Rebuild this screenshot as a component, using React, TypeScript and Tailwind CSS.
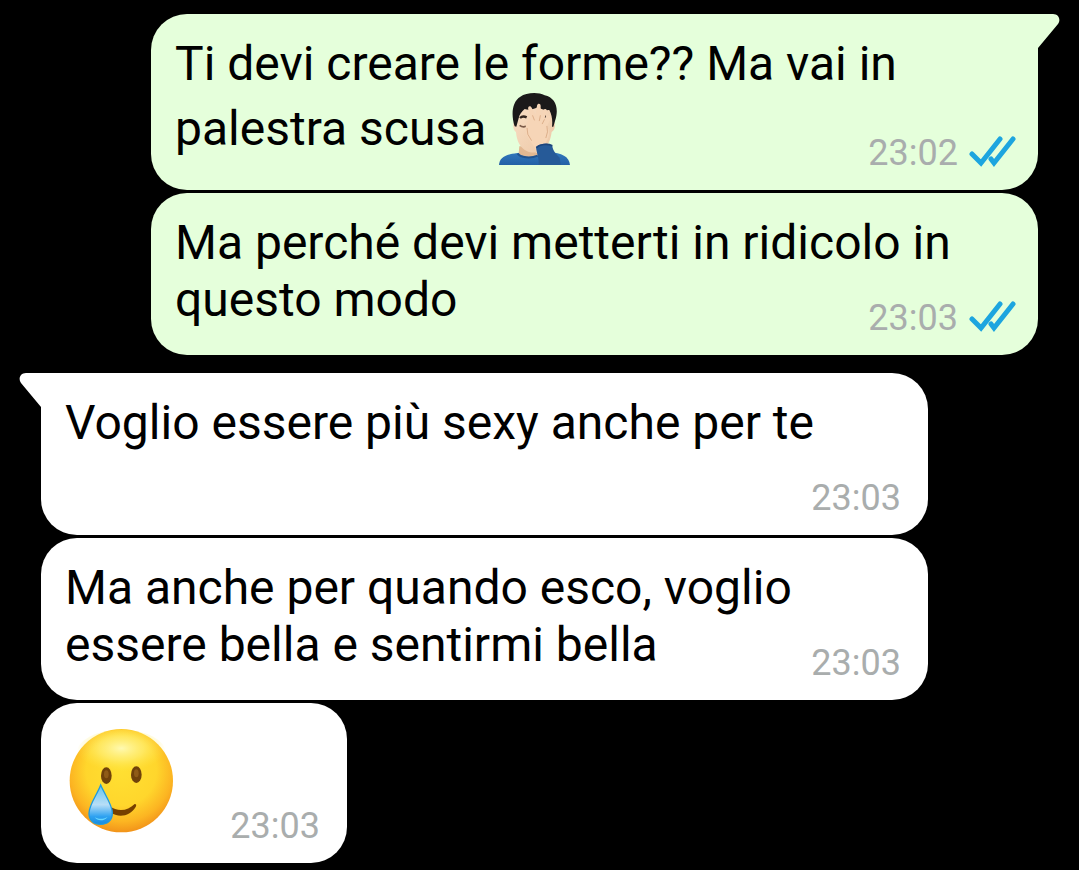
import { ReactNode } from "react"

type BubbleProps = {
    time: string
    sent?: boolean
    tail?: boolean
    short?: boolean
    children: ReactNode
}

const Facepalm = () => (
    <svg viewBox="24 19 219 219" role="img" aria-label="facepalm" className="inline-block size-[73px] align-[-20px]">
        <defs>
            <linearGradient id="skin" x1="0" y1="0" x2="1" y2="1">
                <stop offset="0" stopColor="#f9dfc5" />
                <stop offset="1" stopColor="#ecc7a6" />
            </linearGradient>
            <linearGradient id="shirt" x1="0" y1="0" x2="0" y2="1">
                <stop offset="0" stopColor="#3279bd" />
                <stop offset="1" stopColor="#2360a6" />
            </linearGradient>
        </defs>
        <path d="M27 238C29 216 44 207 82 202L176 198C216 203 237 211 240 238Z" fill="url(#shirt)" />
        <path d="M88 182L86 203C98 217 128 217 148 208V180Z" fill="#e2b892" />
        <path d="M75 105C67 108 68 133 78 139C80 168 92 187 110 196C122 202 140 202 152 196C172 188 182 164 185 139C197 134 198 108 189 106L180 60H84Z" fill="url(#skin)" />
        <path d="M74 122C62 84 67 48 91 33C108 21 144 18 164 29C197 36 208 68 195 106L190 123H186C188 104 186 88 178 73C161 75 150 69 144 64C128 72 116 74 104 70C95 78 88 86 86 98L79 123Z" fill="#1b191a" />
        <path d="M90 97Q98 89 110 95" fill="none" stroke="#33261f" strokeWidth="7" />
        <circle cx="163" cy="92" r="5" fill="#33261f" />
        <path d="M89 119Q98 126 108 122" fill="none" stroke="#7a5a48" strokeWidth="5" />
        <path d="M138 202C139 184 122 172 111 151C105 139 106 120 111 111C115 103 121 97 123 92L115 72C112 62 120 58 125 66L137 89L141 60C143 52 152 53 152 61L152 91L160 74C165 67 172 70 170 77L163 102L174 91C181 87 185 93 181 101L171 122C180 136 179 153 170 166C165 174 169 188 172 195Z" fill="#f6d5b7" />
        <path d="M128 90L133 103M151 90L148 105M163 102L157 114M111 128Q109 146 124 164M171 122Q176 138 168 156" fill="none" stroke="#ddb08c" strokeWidth="3" strokeLinecap="round" />
        <path d="M138 184C148 173 173 171 187 180C188 194 197 204 209 216L212 238H146C148 220 140 204 138 184Z" fill="#265a98" />
        <path d="M139 186C149 176 171 173 187 180" fill="none" stroke="#1c447c" strokeWidth="5" />
        <path d="M83 204C92 216 121 219 143 210" fill="none" stroke="#205390" strokeWidth="6" />
    </svg>
)

const SmilingTear = () => (
    <svg viewBox="27 23 315 315" role="img" aria-label="smiling face with tear" className="size-[105px] shrink-0">
        <defs>
            <radialGradient id="face" cx="0.5" cy="0.4" r="0.62">
                <stop offset="0" stopColor="#ffe032" />
                <stop offset="0.55" stopColor="#ffd62c" />
                <stop offset="0.8" stopColor="#fcb522" />
                <stop offset="1" stopColor="#f08d18" />
            </radialGradient>
            <radialGradient id="shine" cx="0.5" cy="0.4" r="0.5">
                <stop offset="0" stopColor="#fffbb8" stopOpacity="0.95" />
                <stop offset="0.5" stopColor="#fff383" stopOpacity="0.6" />
                <stop offset="1" stopColor="#ffe94c" stopOpacity="0" />
            </radialGradient>
            <linearGradient id="drop" x1="0" y1="0" x2="0" y2="1">
                <stop offset="0" stopColor="#65c4ee" />
                <stop offset="0.5" stopColor="#b7def7" />
                <stop offset="0.8" stopColor="#2fa2f1" />
                <stop offset="1" stopColor="#148ae0" />
            </linearGradient>
        </defs>
        <circle cx="184" cy="181" r="155" fill="url(#face)" />
        <ellipse cx="184" cy="98" rx="134" ry="70" fill="url(#shine)" />
        <ellipse cx="139" cy="166" rx="16" ry="25" fill="#70420a" />
        <ellipse cx="229" cy="163" rx="16" ry="25" fill="#70420a" />
        <ellipse cx="139" cy="162" rx="7" ry="12" fill="#8f5b17" />
        <ellipse cx="229" cy="159" rx="7" ry="12" fill="#8f5b17" />
        <path d="M148 257C174 276 203 272 224 251C229 251 230 255 227 260C210 289 174 294 151 275Z" fill="#764000" />
        <path d="M122 194C134 222 157 254 157 277C157 300 143 312 122 312C99 312 87 299 87 279C87 253 112 222 122 194Z" fill="url(#drop)" stroke="#219bdd" strokeWidth="4" />
        <path d="M104 290C112 303 132 304 143 289C136 296 113 298 104 290Z" fill="#68d8ff" />
    </svg>
)

const ReadTicks = () => (
    <svg viewBox="0 0 48 34" role="img" aria-label="read" className="h-[34px] w-12 shrink-0 fill-none stroke-[#1da5df] stroke-[5]">
        <path d="M4 18L13 27L32 3M23 23L26 27L45 3" strokeLinecap="round" strokeLinejoin="miter" />
    </svg>
)

const Tail = ({ sent }: { sent: boolean }) => (
    <svg
        viewBox="0 0 62 36"
        aria-hidden="true"
        className={sent ? "absolute top-0 -right-[22px] h-9 w-[62px] fill-[#e5ffdb]" : "absolute top-0 -left-[22px] h-9 w-[62px] -scale-x-100 fill-white"}
    >
        <path d="M0 0H55C61 0 63 6 60 10L40 34V36H0Z" />
    </svg>
)

// keeps the last line of a message clear of the time
const TimeSpace = ({ sent }: { sent: boolean }) => (
    <span className={sent ? "inline-block h-px w-40" : "inline-block h-px w-28"} />
)

function Bubble({ time, sent = false, tail = false, short = false, children }: BubbleProps) {
    return (
        <li
            className={`relative grid rounded-[36px] px-6 pt-[21px] pb-[17px] ${sent ? "self-end bg-[#e5ffdb]" : "self-start bg-white"} ${short ? "min-h-40 w-[306px]" : "min-h-[162px] w-full max-w-[887px]"}`}
        >
            {tail && <Tail sent={sent} />}
            <div className="relative col-start-1 row-start-1 pb-2 text-5xl leading-[57px] text-black">
                {short ? children : <p>{children}<TimeSpace sent={sent} /></p>}
            </div>
            <div className={`relative col-start-1 row-start-1 flex items-center gap-2.5 self-end justify-self-end text-4xl leading-10 text-[#a9adad] ${sent ? "-mr-0.5" : "mr-[3px]"}`}>
                <time>{time}</time>
                {sent && <ReadTicks />}
            </div>
        </li>
    )
}

export default function App() {
    return (
        <main className="min-h-screen bg-black px-[41px] pt-3.5 pb-1.5 font-[Roboto,sans-serif]">
            <ul className="flex flex-col gap-[3px]">
                <Bubble sent tail time="23:02">
                    Ti devi creare le forme?? Ma vai in palestra scusa <Facepalm />
                </Bubble>
                <Bubble sent time="23:03">
                    Ma perché devi metterti in ridicolo in questo modo
                </Bubble>
            </ul>
            <ul className="mt-[18px] flex flex-col gap-[3px]">
                <Bubble tail time="23:03">
                    Voglio essere più sexy anche per te
                </Bubble>
                <Bubble time="23:03">
                    Ma anche per quando esco, voglio essere bella e sentirmi bella
                </Bubble>
                <Bubble short time="23:03">
                    <div className="flex px-1 pt-1"><SmilingTear /></div>
                </Bubble>
            </ul>
        </main>
    )
}
